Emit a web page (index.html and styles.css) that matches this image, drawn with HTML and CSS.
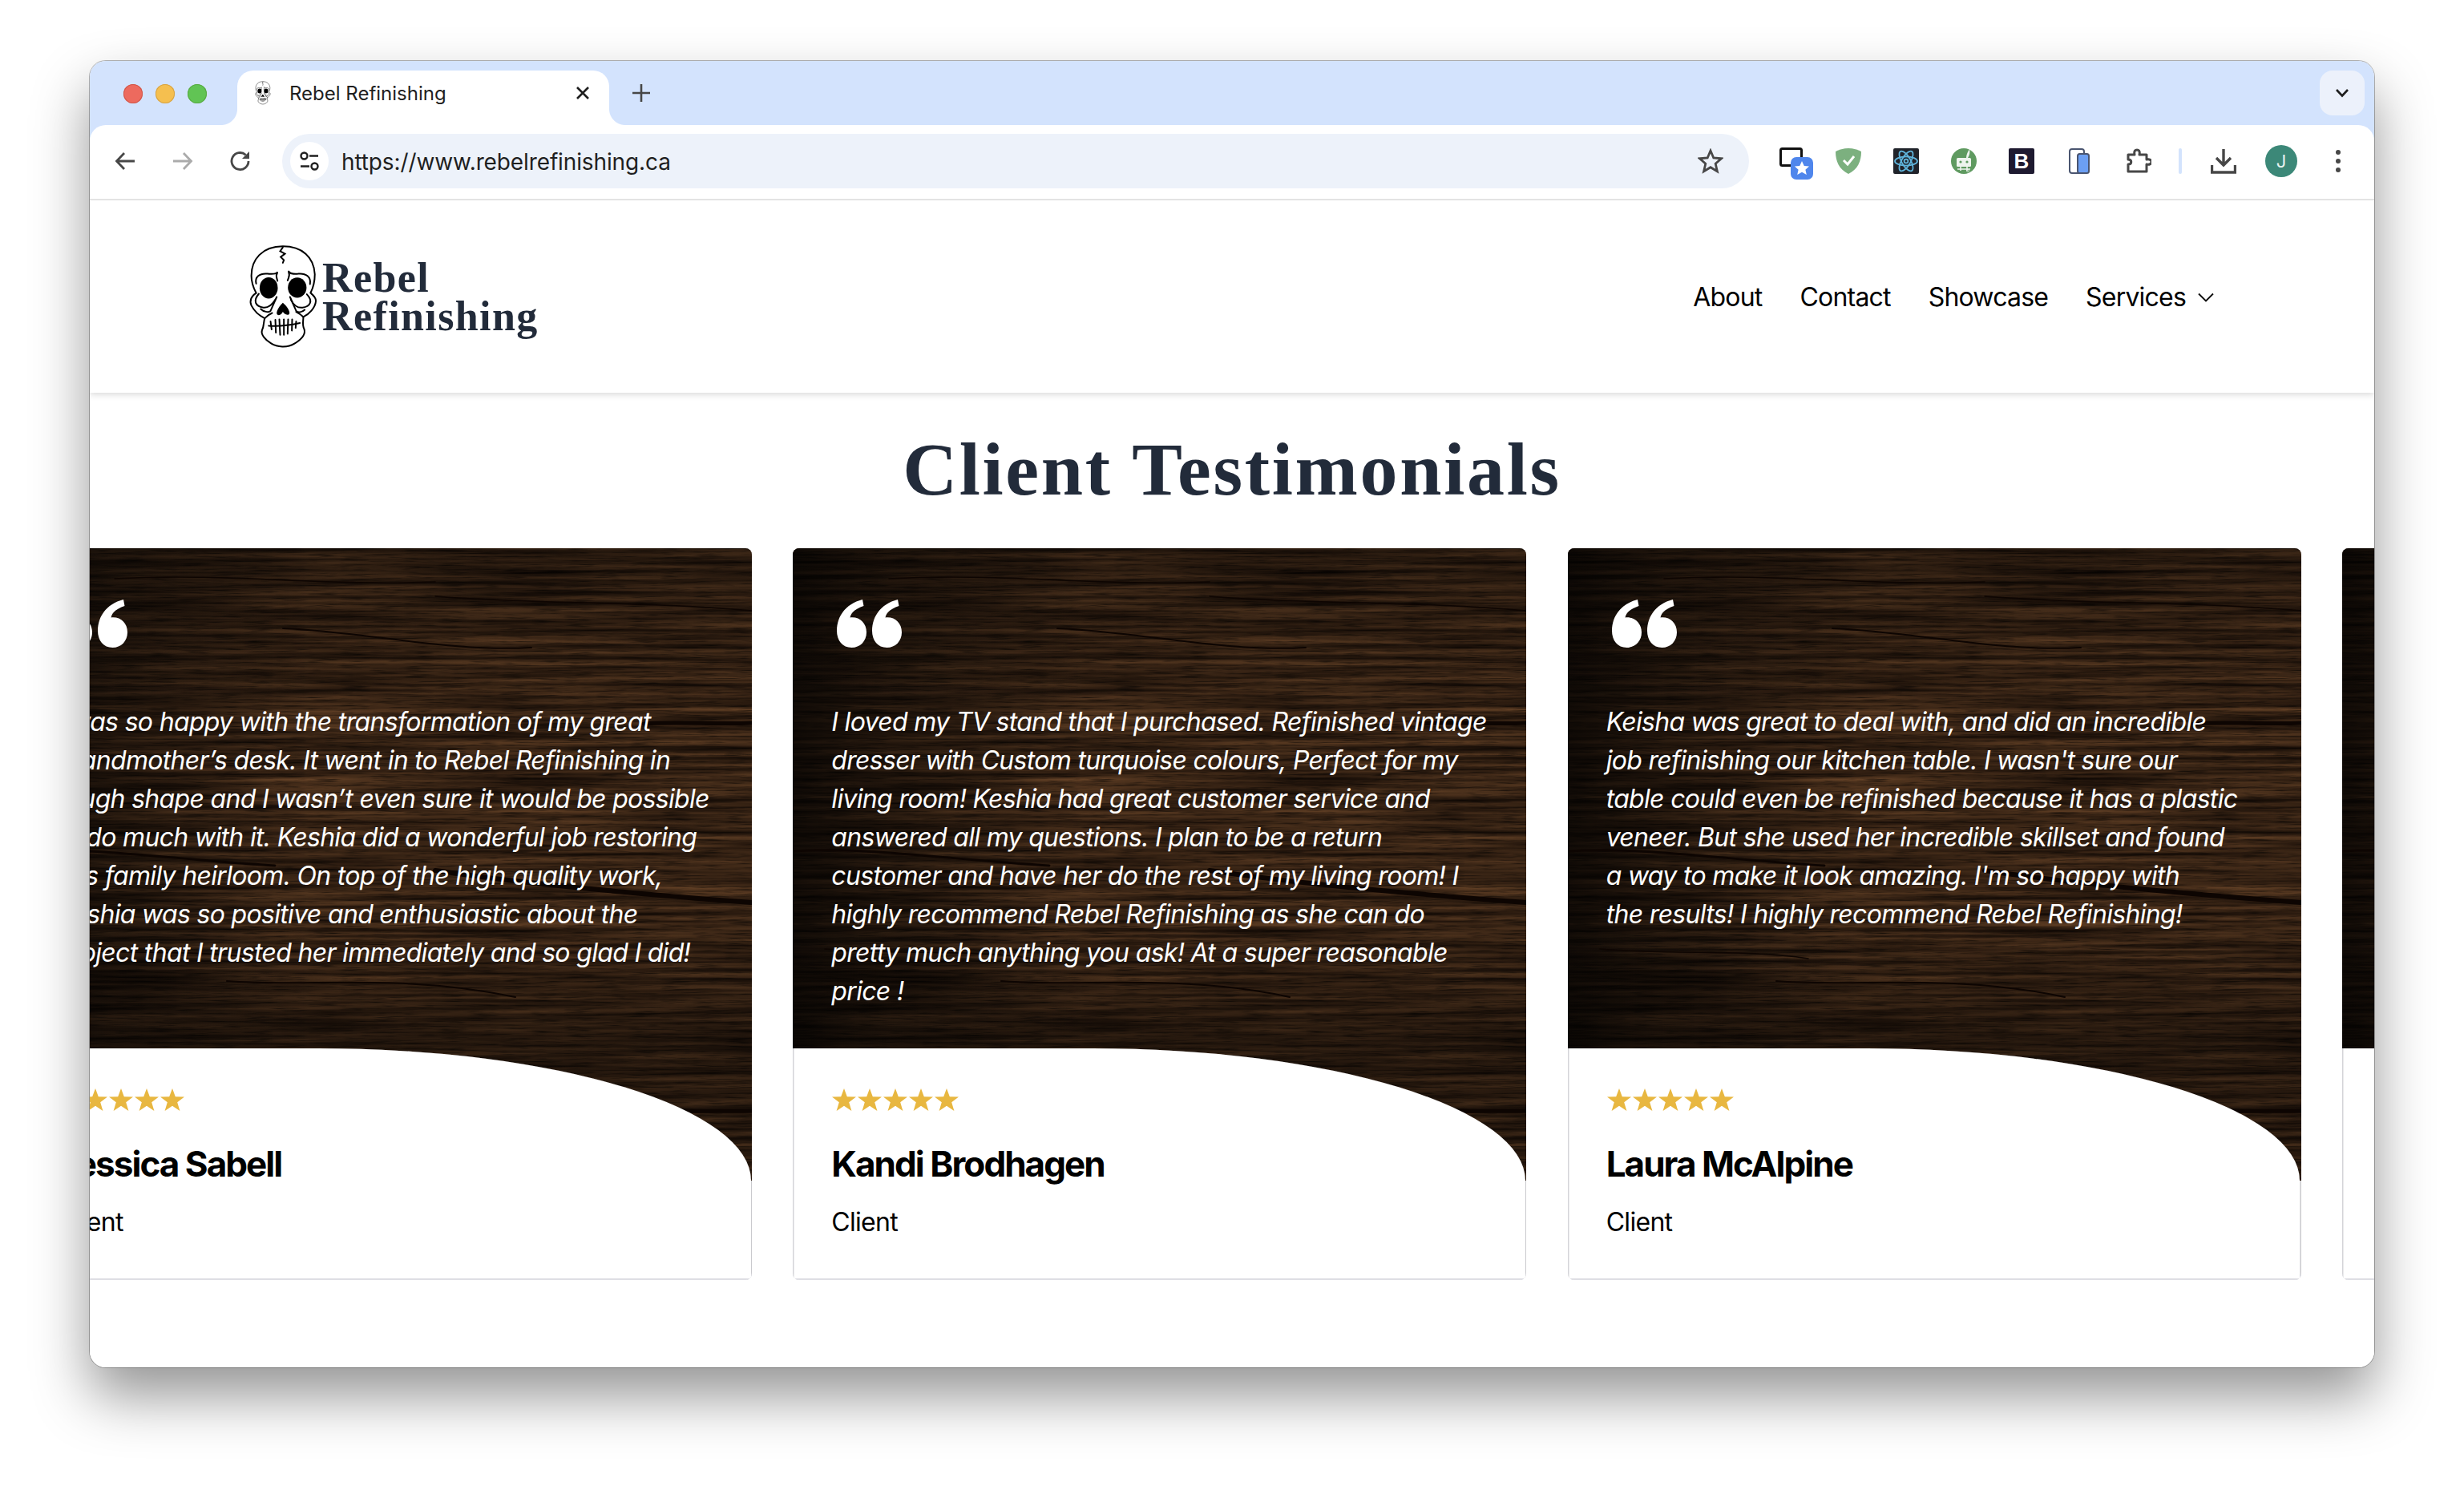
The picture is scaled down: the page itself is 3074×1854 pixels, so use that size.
FILE: index.html
```html
<!DOCTYPE html>
<html lang="en">
<head>
<meta charset="utf-8">
<title>Rebel Refinishing</title>
<link rel="stylesheet" href="styles.css">
</head>
<body>
<svg class="defs" width="0" height="0" aria-hidden="true">
  <defs>
    <filter id="grain" x="0" y="0" width="100%" height="100%" color-interpolation-filters="sRGB">
      <feTurbulence type="fractalNoise" baseFrequency="0.004 0.15" numOctaves="4" seed="11" result="coarse"/>
      <feColorMatrix in="coarse" type="matrix" values="0.4 0 0 0 0.02  0.27 0 0 0 0.005  0.16 0 0 0 0  0 0 0 0 1" result="c1"/>
      <feTurbulence type="fractalNoise" baseFrequency="0.025 0.5" numOctaves="3" seed="4" result="fine"/>
      <feColorMatrix in="fine" type="matrix" values="1.5 0 0 0 0.25  1.5 0 0 0 0.25  1.5 0 0 0 0.25  0 0 0 0 1" result="c2"/>
      <feComposite in="c1" in2="c2" operator="arithmetic" k1="1" k2="0" k3="0" k4="0"/>
    </filter>
    <linearGradient id="vigLeft" x1="0" x2="1" y1="0" y2="0">
      <stop offset="0" stop-color="#000" stop-opacity=".72"/>
      <stop offset=".12" stop-color="#000" stop-opacity=".42"/>
      <stop offset=".4" stop-color="#000" stop-opacity="0"/>
    </linearGradient>
    <linearGradient id="vigBottom" x1="0" x2="0" y1="0" y2="1">
      <stop offset="0" stop-color="#000" stop-opacity=".3"/>
      <stop offset=".25" stop-color="#000" stop-opacity="0"/>
      <stop offset=".6" stop-color="#000" stop-opacity="0"/>
      <stop offset=".79" stop-color="#000" stop-opacity=".35"/>
      <stop offset="1" stop-color="#000" stop-opacity=".1"/>
    </linearGradient>
    <symbol id="woodTex" viewBox="0 0 915 789" preserveAspectRatio="none">
      <rect width="915" height="789" fill="#2d1b0c" filter="url(#grain)"/>
      <rect width="915" height="789" fill="url(#vigLeft)"/>
      <rect width="915" height="789" fill="url(#vigBottom)"/>
      <g fill="none" stroke="#0d0502" stroke-linecap="round">
        <path d="M780 219 C820 216 870 220 915 218" stroke-width="5"/>
        <path d="M0 378 C90 372 190 388 320 396" stroke-width="3"/>
        <path d="M520 402 C640 420 780 432 915 442" stroke-width="6"/>
        <path d="M640 704 C730 698 830 704 915 702" stroke-width="5"/>
        <path d="M330 100 C430 104 540 130 640 124" stroke-width="2"/>
        <path d="M120 38 C260 30 380 48 520 42" stroke-width="1.5"/>
        <path d="M520 60 C640 70 780 66 915 78" stroke-width="1.5"/>
        <path d="M260 540 C360 548 480 530 620 560" stroke-width="2"/>
        <path d="M40 500 C140 508 220 500 300 512" stroke-width="1.5"/>
      </g>
    </symbol>
    <symbol id="star" viewBox="0 0 32 28">
      <polygon points="16,0 19.8,10.2 31,10.6 22.2,17.3 25.4,28 16,21.8 6.6,28 9.8,17.3 1,10.6 12.2,10.2" fill="#e8b740"/>
    </symbol>
    <symbol id="quoteMark" viewBox="0 0 81 60">
      <path d="M32 0 L33.5 8 C25 11 18 15 16.5 22.5 C28 21 37 29 37 41 C37 52 29 60 18.5 60 C7 60 0 51 0 39 C0 20 12 5 32 0Z"/>
      <path transform="translate(44 0)" d="M32 0 L33.5 8 C25 11 18 15 16.5 22.5 C28 21 37 29 37 41 C37 52 29 60 18.5 60 C7 60 0 51 0 39 C0 20 12 5 32 0Z"/>
    </symbol>
    <symbol id="skull" viewBox="90 70 260 400">
      <path d="M218 80 C140 80 100 130 100 190 C100 220 110 240 118 255 C100 265 92 285 100 302 C110 322 130 340 150 350 C145 365 148 380 140 395 C135 410 150 430 175 445 C195 458 235 462 262 445 C290 428 305 410 298 390 C290 375 295 360 295 345 C315 335 340 312 342 285 C342 270 330 262 322 255 C332 235 338 210 338 185 C335 120 290 80 218 80Z" fill="#fff" stroke="#000" stroke-width="6"/>
      <ellipse cx="165" cy="236" rx="34" ry="40"/>
      <ellipse cx="272" cy="235" rx="35" ry="38"/>
      <g fill="none" stroke="#000" stroke-width="6" stroke-linecap="round">
        <path d="M118 220 C112 195 130 180 162 183 C175 184 190 186 197 178"/>
        <path d="M198 210 C195 195 190 190 197 180"/>
        <path d="M320 222 C325 195 305 180 275 183 C262 184 248 186 240 174"/>
        <path d="M236 208 C240 195 246 190 240 176"/>
        <path d="M128 258 C105 285 115 305 145 310 C165 312 178 300 190 280"/>
        <path d="M308 260 C332 285 322 305 292 310 C272 312 258 300 248 280"/>
        <path d="M135 315 C145 325 165 330 172 322 L195 270"/>
        <path d="M300 318 C290 328 275 330 268 322 L245 270"/>
        <path d="M150 350 C160 340 168 334 178 330"/>
        <path d="M295 345 C285 335 280 332 268 326"/>
        <path d="M218 84 L208 98 L226 108 L210 120 L222 132 L218 142"/>
        <path d="M165 378 C200 382 245 376 282 368"/>
        <path d="M172 362 L176 392"/>
        <path d="M190 356 L192 404"/>
        <path d="M205 354 L208 412"/>
        <path d="M222 354 L222 412"/>
        <path d="M238 354 L236 408"/>
        <path d="M253 354 L252 396"/>
        <path d="M268 362 L266 386"/>
      </g>
      <path d="M218 292 C200 308 188 335 200 338 C210 339 215 332 218 326 C222 332 230 339 240 336 C250 332 236 306 218 292Z"/>
    </symbol>
  </defs>
</svg>

<div class="window">
  <div class="chrome">
    <div class="tabstrip">
      <div class="lights">
        <span class="light light-red"></span>
        <span class="light light-yellow"></span>
        <span class="light light-green"></span>
      </div>
      <div class="tab">
        <svg class="favicon" width="20" height="30"><use href="#skull"/></svg>
        <span class="tab-title">Rebel Refinishing</span>
        <svg class="tab-close" width="20" height="20" viewBox="0 0 20 20"><path d="M3 3 L17 17 M17 3 L3 17" stroke="#1f1f1f" stroke-width="2.6" fill="none"/></svg>
      </div>
      <svg class="newtab" width="24" height="24" viewBox="0 0 24 24"><path d="M12 1 V23 M1 12 H23" stroke="#474747" stroke-width="2.6" fill="none"/></svg>
      <div class="tabmenu">
        <svg width="18" height="12" viewBox="0 0 18 12"><path d="M2 2 L9 9.5 L16 2" stroke="#1f1f1f" stroke-width="2.6" fill="none"/></svg>
      </div>
    </div>

    <div class="toolbar">
      <div class="navbtn">
        <svg width="28" height="28" viewBox="0 0 28 28"><path d="M26 14 H4 M13 4 L3.5 14 L13 24" stroke="#474747" stroke-width="2.8" fill="none"/></svg>
      </div>
      <div class="navbtn">
        <svg width="28" height="28" viewBox="0 0 28 28"><path d="M2 14 H24 M15 4 L24.5 14 L15 24" stroke="#ababab" stroke-width="2.8" fill="none"/></svg>
      </div>
      <div class="navbtn">
        <svg width="28" height="28" viewBox="0 0 28 28"><path d="M24 14 A10.5 10.5 0 1 1 20.5 6.2" stroke="#474747" stroke-width="2.8" fill="none"/><path d="M25 2 V11 H16 Z" fill="#474747"/></svg>
      </div>
      <div class="urlbar">
        <span class="siteinfo">
          <svg width="28" height="28" viewBox="0 0 28 28"><g fill="none" stroke="#1f1f1f" stroke-width="2.4"><circle cx="7.5" cy="7.5" r="4"/><path d="M14 7.5 H25"/><circle cx="20.5" cy="20.5" r="4"/><path d="M3 20.5 H14"/></g></svg>
        </span>
        <span class="url">https://www.rebelrefinishing.ca</span>
        <svg class="bookmark" width="32" height="32" viewBox="0 0 32 32"><path d="M16 3 L19.8 12 L29.5 12.8 L22.2 19.2 L24.4 28.8 L16 23.7 L7.6 28.8 L9.8 19.2 L2.5 12.8 L12.2 12 Z" fill="none" stroke="#474747" stroke-width="2.8" stroke-linejoin="miter"/></svg>
      </div>
      <svg class="ext ext-first" width="42" height="40" viewBox="0 0 42 40">
        <rect x="1.5" y="1.5" width="26" height="21" rx="2" fill="#fff" stroke="#111" stroke-width="3"/>
        <rect x="14" y="12" width="28" height="28" rx="7" fill="#4f86ec"/>
        <path d="M28 17 L30.8 23 L37 23.6 L32.4 27.8 L33.8 34 L28 30.7 L22.2 34 L23.6 27.8 L19 23.6 L25.2 23 Z" fill="#fff"/>
      </svg>
      <svg class="ext" width="32" height="32" viewBox="0 0 32 32">
        <path d="M16 0 C22 0 28 2 32 4 C32 16 28 26 16 32 C4 26 0 16 0 4 C4 2 10 0 16 0Z" fill="#7cb07f"/>
        <path d="M10 15 L15 20 L23 10" fill="none" stroke="#fff" stroke-width="3"/>
      </svg>
      <svg class="ext" width="32" height="32" viewBox="0 0 32 32">
        <rect width="32" height="32" rx="2" fill="#20232a"/>
        <g fill="none" stroke="#5fb4dc" stroke-width="1.8">
          <ellipse cx="16" cy="16" rx="14" ry="5.6"/>
          <ellipse cx="16" cy="16" rx="14" ry="5.6" transform="rotate(60 16 16)"/>
          <ellipse cx="16" cy="16" rx="14" ry="5.6" transform="rotate(120 16 16)"/>
          <circle cx="16" cy="16" r="2.4"/>
        </g>
      </svg>
      <svg class="ext" width="32" height="32" viewBox="0 0 32 32">
        <circle cx="16" cy="16" r="16" fill="#5f9a60"/>
        <rect x="7" y="12" width="18" height="11" rx="1.5" fill="#eef4ee"/>
        <circle cx="12" cy="17" r="1.6" fill="#5f9a60"/>
        <circle cx="20" cy="17" r="1.6" fill="#5f9a60"/>
        <path d="M19 12 C19 8 21 4 23 1 C24 5 23 9 21 12Z" fill="#eef4ee"/>
        <path d="M8 26 H24 M12 23 V28 M20 23 V28" stroke="#eef4ee" stroke-width="1.6"/>
        <circle cx="21" cy="28" r="1.5" fill="none" stroke="#eef4ee" stroke-width=".8"/>
      </svg>
      <div class="ext ext-b">B</div>
      <svg class="ext ext-phones" width="26" height="32" viewBox="0 0 26 32">
        <rect x="1" y="1" width="18" height="30" rx="3" fill="#fff" stroke="#4a5570" stroke-width="2"/>
        <rect x="11" y="7" width="14" height="24" rx="2.5" fill="#6c9ff3" stroke="#4a5570" stroke-width="2"/>
      </svg>
      <svg class="ext" width="32" height="32" viewBox="0 0 32 32">
        <path d="M3 8 H11 C10 3 12 2 14 2 C16 2 18 3 17 8 H26 V14 C30 13 32 15 32 17 C32 19 30 21 26 20 V29 H3 V20 C8 20 8 14 3 14 Z" fill="none" stroke="#474747" stroke-width="3" stroke-linejoin="round"/>
      </svg>
      <span class="sep"></span>
      <svg class="dl" width="32" height="32" viewBox="0 0 32 32">
        <path d="M16 1 V20 M7 12 L16 21 L25 12 M1.5 21 V30 H30.5 V21" fill="none" stroke="#474747" stroke-width="3.4"/>
      </svg>
      <span class="avatar">J</span>
      <svg class="kebab" width="6" height="28" viewBox="0 0 6 28"><circle cx="3" cy="3" r="3" fill="#474747"/><circle cx="3" cy="14" r="3" fill="#474747"/><circle cx="3" cy="25" r="3" fill="#474747"/></svg>
    </div>
  </div>

  <div class="page">
    <header class="site-header">
      <a class="logo">
        <svg class="logo-skull" width="87" height="133"><use href="#skull"/></svg>
        <span class="logo-text">Rebel<br>Refinishing</span>
      </a>
      <nav class="site-nav">
        <a>About</a>
        <a>Contact</a>
        <a>Showcase</a>
        <a class="has-caret">Services
          <svg width="20" height="12" viewBox="0 0 20 12"><path d="M1 1.5 L10 10.5 L19 1.5" fill="none" stroke="#000" stroke-width="1.8"/></svg>
        </a>
      </nav>
    </header>

    <h1 class="title">Client Testimonials</h1>

    <div class="carousel">
      <article class="card">
        <svg class="wood" width="915" height="789"><use href="#woodTex"/></svg>
        <div class="card-quote">
          <svg class="quote-icon" width="81" height="60"><use href="#quoteMark"/></svg>
          <p class="quote-text">I was so happy with the transformation of my great<br>grandmother’s desk. It went in to Rebel Refinishing in<br>rough shape and I wasn’t even sure it would be possible<br>to do much with it. Keshia did a wonderful job restoring<br>this family heirloom. On top of the high quality work,<br>Keshia was so positive and enthusiastic about the<br>project that I trusted her immediately and so glad I did!</p>
        </div>
        <div class="card-info">
          <div class="stars"><svg width="32" height="28"><use href="#star"/></svg><svg width="32" height="28"><use href="#star"/></svg><svg width="32" height="28"><use href="#star"/></svg><svg width="32" height="28"><use href="#star"/></svg><svg width="32" height="28"><use href="#star"/></svg></div>
          <h3 class="name">Jessica Sabell</h3>
          <p class="role">Client</p>
        </div>
      </article>
      <article class="card">
        <svg class="wood" width="915" height="789"><use href="#woodTex"/></svg>
        <div class="card-quote">
          <svg class="quote-icon" width="81" height="60"><use href="#quoteMark"/></svg>
          <p class="quote-text">I loved my TV stand that I purchased. Refinished vintage<br>dresser with Custom turquoise colours, Perfect for my<br>living room! Keshia had great customer service and<br>answered all my questions. I plan to be a return<br>customer and have her do the rest of my living room! I<br>highly recommend Rebel Refinishing as she can do<br>pretty much anything you ask! At a super reasonable<br>price !</p>
        </div>
        <div class="card-info">
          <div class="stars"><svg width="32" height="28"><use href="#star"/></svg><svg width="32" height="28"><use href="#star"/></svg><svg width="32" height="28"><use href="#star"/></svg><svg width="32" height="28"><use href="#star"/></svg><svg width="32" height="28"><use href="#star"/></svg></div>
          <h3 class="name">Kandi Brodhagen</h3>
          <p class="role">Client</p>
        </div>
      </article>
      <article class="card">
        <svg class="wood" width="915" height="789"><use href="#woodTex"/></svg>
        <div class="card-quote">
          <svg class="quote-icon" width="81" height="60"><use href="#quoteMark"/></svg>
          <p class="quote-text">Keisha was great to deal with, and did an incredible<br>job refinishing our kitchen table. I wasn't sure our<br>table could even be refinished because it has a plastic<br>veneer. But she used her incredible skillset and found<br>a way to make it look amazing. I'm so happy with<br>the results! I highly recommend Rebel Refinishing!</p>
        </div>
        <div class="card-info">
          <div class="stars"><svg width="32" height="28"><use href="#star"/></svg><svg width="32" height="28"><use href="#star"/></svg><svg width="32" height="28"><use href="#star"/></svg><svg width="32" height="28"><use href="#star"/></svg><svg width="32" height="28"><use href="#star"/></svg></div>
          <h3 class="name">Laura McAlpine</h3>
          <p class="role">Client</p>
        </div>
      </article>
      <article class="card">
        <svg class="wood" width="915" height="789"><use href="#woodTex"/></svg>
        <div class="card-quote"></div>
        <div class="card-info"></div>
      </article>
    </div>
  </div>
</div>
</body>
</html>
```

FILE: styles.css
```css
* { box-sizing: border-box; }
html, body { margin: 0; height: 100%; }
body {
  background: #fff;
  width: 3074px;
  height: 1854px;
  padding: 76px 0 0 112px;
  overflow: hidden;
  font-family: Inter, "Liberation Sans", sans-serif;
  color: #000;
}
.defs { position: absolute; }

.window {
  width: 2850px;
  height: 1630px;
  border-radius: 20px;
  overflow: hidden;
  background: #fff;
  display: flex;
  flex-direction: column;
  box-shadow: 0 0 0 1px rgba(0,0,0,.28), 0 36px 70px rgba(0,0,0,.42);
}

/* browser chrome */
.chrome { flex: none; background: #d3e3fd; }
.tabstrip {
  height: 80px;
  display: flex;
  align-items: flex-start;
  padding-top: 12px;
}
.lights { display: flex; gap: 16px; margin: 17px 0 0 42px; }
.light { width: 24px; height: 24px; border-radius: 50%; }
.light-red { background: #ed6a5e; box-shadow: inset 0 0 0 1px #d05548; }
.light-yellow { background: #f5bf4f; box-shadow: inset 0 0 0 1px #d6a243; }
.light-green { background: #61c454; box-shadow: inset 0 0 0 1px #58a942; }
.tab {
  position: relative;
  z-index: 1;
  width: 464px;
  height: 68px;
  margin-left: 38px;
  background: #fff;
  border-radius: 20px 20px 0 0;
  display: flex;
  align-items: center;
  padding: 0 0 12px 22px;
}
.tab::before, .tab::after {
  content: "";
  position: absolute;
  bottom: 0;
  width: 20px;
  height: 20px;
}
.tab::before { left: -20px; background: radial-gradient(circle at 0 0, #d3e3fd 19.5px, #fff 20.5px); }
.tab::after { right: -20px; background: radial-gradient(circle at 100% 0, #d3e3fd 19.5px, #fff 20.5px); }
.favicon { flex: none; }
.tab-title { margin-left: 23px; font-size: 24px; color: #1f1f1f; white-space: nowrap; }
.tab-close { margin-left: auto; margin-right: 23px; }
.newtab { margin: 16px 0 0 28px; }
.tabmenu {
  margin: 0 12px 0 auto;
  width: 56px;
  height: 56px;
  background: #ecf1fb;
  border-radius: 16px;
  display: flex;
  align-items: center;
  justify-content: center;
}

.toolbar {
  height: 94px;
  background: #fff;
  border-radius: 20px 20px 0 0;
  border-bottom: 2px solid #e3e3e3;
  display: flex;
  align-items: center;
  padding: 0 0 2px 8px;
}
.navbtn { width: 72px; height: 48px; display: flex; align-items: center; justify-content: center; flex: none; }
.urlbar {
  width: 1830px;
  height: 68px;
  margin: 0 38px 0 16px;
  flex: none;
  border-radius: 34px;
  background: #edf2fa;
  display: flex;
  align-items: center;
  padding: 0 32px 0 10px;
}
.siteinfo {
  width: 48px; height: 48px;
  border-radius: 50%;
  background: #fff;
  display: flex; align-items: center; justify-content: center;
  flex: none;
}
.url { margin-left: 16px; padding-top: 2px; font-size: 28px; letter-spacing: -.12px; color: #1f1f1f; white-space: nowrap; }
.bookmark { margin-left: auto; }
.ext { flex: none; margin-right: 40px; }
.ext-first { margin-right: 28px; margin-top: 6px; }
.ext-b {
  width: 32px; height: 32px;
  background: #1e1a30;
  color: #fff;
  font: 700 26px/32px "Liberation Sans", sans-serif;
  text-align: center;
  border-radius: 2px;
}
.ext-phones { margin-left: 3px; margin-right: 45px; }
.sep { width: 4px; height: 32px; background: #d3e3fd; border-radius: 2px; flex: none; margin: 0 36px 0 -6px; }
.dl { flex: none; margin-right: 36px; }
.avatar {
  width: 40px; height: 40px;
  border-radius: 50%;
  background: #3c8878;
  color: #e8f3ef;
  font-size: 22px;
  display: flex; align-items: center; justify-content: center;
  flex: none;
}
.kebab { flex: none; margin-left: 48px; }

/* page */
.page { flex: 1; overflow: hidden; background: #fff; }
.site-header {
  height: 240px;
  display: flex;
  align-items: center;
  justify-content: space-between;
  padding: 0 200px 0 198px;
  box-shadow: 0 2px 8px rgba(0,0,0,.16);
  position: relative;
}
.logo { display: flex; align-items: center; }
.logo-skull { flex: none; }
.logo-text {
  margin-left: 5px;
  padding-top: 2px;
  font: 700 52px/48px "Liberation Serif", serif;
  color: #222b3a;
  letter-spacing: 1.4px;
}
.site-nav { display: flex; gap: 47px; padding-top: 2px; font-size: 32px; line-height: 40px; letter-spacing: -.8px; }
.has-caret { display: inline-flex; align-items: center; gap: 15px; }

.title {
  margin: 0;
  padding-top: 40px;
  height: 194px;
  text-align: center;
  font: 700 94px/110px "Liberation Serif", serif;
  color: #222b3a;
  letter-spacing: 2.7px;
}

.carousel {
  display: flex;
  gap: 51.33px;
  margin-left: -89px;
  height: 920px;
  padding-bottom: 4px;
}
.card {
  position: relative;
  flex: none;
  width: 915px;
  height: 913px;
  border-radius: 8px;
  overflow: hidden;
  background: #fff;
  box-shadow: inset 0 -2px 0 #e4e4ea, inset 1.5px 0 0 #d4d4d8, inset -1.5px 0 0 #d4d4d8;
  display: flex;
  flex-direction: column;
}
.wood { position: absolute; left: 0; top: 0; }
.card-quote {
  position: relative;
  height: 624px;
  flex: none;
  padding: 64px 48px 0;
  color: #fff;
}
.quote-icon { display: block; fill: #fff; margin: 0 0 69px 7px; }
.quote-text {
  margin: 0;
  font-size: 32px;
  line-height: 48px;
  font-style: italic;
  white-space: nowrap;
  letter-spacing: -.68px;
  color: #fff;
}
.card-info {
  position: relative;
  flex: 1;
  margin: 0 1.5px 2px 0;
  background: #fff;
  border-top-right-radius: 540px 165px;
  padding: 50px 46.5px 0 48px;
  box-shadow: inset 1.5px 0 0 #d4d4d8, 0 -1px 6px rgba(0,0,0,.1);
}
.stars { display: flex; height: 28px; }
.stars svg { display: block; }
.name {
  margin: 36px 0 0;
  font-size: 44px;
  line-height: 60px;
  font-weight: 700;
  letter-spacing: -1.95px;
}
.role {
  margin: 19px 0 0;
  font-size: 32px;
  line-height: 48px;
  letter-spacing: -.7px;
}
```
